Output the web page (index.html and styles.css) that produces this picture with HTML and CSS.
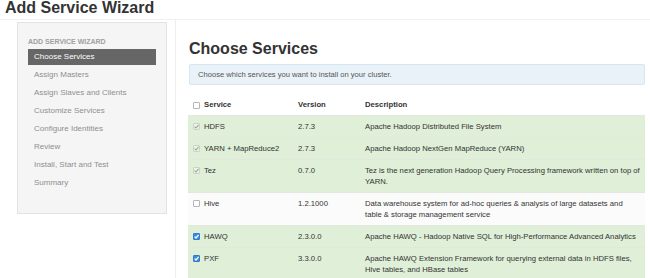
FILE: index.html
```html
<!DOCTYPE html>
<html lang="en">
<head>
    <meta charset="UTF-8">
    <meta name="viewport" content="width=device-width, initial-scale=1.0">
    <title>Add Service Wizard</title>
    <link rel="stylesheet" href="styles.css">
</head>
<body>
    <h1 class="page-title">Add Service Wizard</h1>

    <div class="wizard">
        <div class="wizard-nav">
            <div class="nav-box">
                <div class="nav-header">ADD SERVICE WIZARD</div>
                <div class="nav-item active">Choose Services</div>
                <div class="nav-item">Assign Masters</div>
                <div class="nav-item">Assign Slaves and Clients</div>
                <div class="nav-item">Customize Services</div>
                <div class="nav-item">Configure Identities</div>
                <div class="nav-item">Review</div>
                <div class="nav-item">Install, Start and Test</div>
                <div class="nav-item">Summary</div>
            </div>
        </div>

        <div class="wizard-content">
            <h2>Choose Services</h2>
            <div class="alert">Choose which services you want to install on your cluster.</div>

            <table class="services">
                <thead>
                    <tr>
                        <th class="col-name"><span class="cb"></span>Service</th>
                        <th class="col-version">Version</th>
                        <th>Description</th>
                    </tr>
                </thead>
                <tbody>
                    <tr class="selected">
                        <td><span class="cb cb-locked"><svg viewBox="0 0 7 7"><polyline points="1.6,3.6 3,5 5.6,1.9"/></svg></span>HDFS</td>
                        <td>2.7.3</td>
                        <td>Apache Hadoop Distributed File System</td>
                    </tr>
                    <tr class="selected">
                        <td><span class="cb cb-locked"><svg viewBox="0 0 7 7"><polyline points="1.6,3.6 3,5 5.6,1.9"/></svg></span>YARN + MapReduce2</td>
                        <td>2.7.3</td>
                        <td>Apache Hadoop NextGen MapReduce (YARN)</td>
                    </tr>
                    <tr class="selected">
                        <td><span class="cb cb-locked"><svg viewBox="0 0 7 7"><polyline points="1.6,3.6 3,5 5.6,1.9"/></svg></span>Tez</td>
                        <td>0.7.0</td>
                        <td>Tez is the next generation Hadoop Query Processing framework written on top of YARN.</td>
                    </tr>
                    <tr>
                        <td><span class="cb"></span>Hive</td>
                        <td>1.2.1000</td>
                        <td>Data warehouse system for ad-hoc queries &amp; analysis of large datasets and<br>table &amp; storage management service</td>
                    </tr>
                    <tr class="selected">
                        <td><span class="cb cb-on"><svg viewBox="0 0 7 7"><polyline points="1.6,3.6 3,5 5.6,1.9"/></svg></span>HAWQ</td>
                        <td>2.3.0.0</td>
                        <td>Apache HAWQ - Hadoop Native SQL for High-Performance Advanced Analytics</td>
                    </tr>
                    <tr class="selected">
                        <td><span class="cb cb-on"><svg viewBox="0 0 7 7"><polyline points="1.6,3.6 3,5 5.6,1.9"/></svg></span>PXF</td>
                        <td>3.3.0.0</td>
                        <td>Apache HAWQ Extension Framework for querying external data in HDFS files, Hive tables, and HBase tables</td>
                    </tr>
                </tbody>
            </table>
        </div>
    </div>
</body>
</html>
```

FILE: styles.css
```css
* {
    margin: 0;
    padding: 0;
    box-sizing: border-box;
    font-family: 'Liberation Sans', Arial, sans-serif;
}

body {
    background-color: #fff;
    color: #333;
    overflow: hidden;
}

.page-title {
    font-size: 16px;
    line-height: 16px;
    font-weight: bold;
    color: #333;
    padding-left: 5px;
    height: 20px;
    border-bottom: 1px solid #f0f0f0;
}

.wizard {
    display: flex;
}

.wizard-nav {
    width: 175px;
    padding: 2px 8px 0 17px;
}

.nav-box {
    background: #f5f5f5;
    border: 1px solid #e3e3e3;
    padding: 14px 10px 20px;
}

.nav-header {
    font-size: 7px;
    line-height: 10px;
    font-weight: bold;
    color: #a0a0a0;
    margin-bottom: 2px;
}

.nav-item {
    font-size: 8px;
    line-height: 16px;
    height: 16px;
    padding-left: 6px;
    margin-bottom: 2px;
    color: #8f8f8f;
}

.nav-item.active {
    background-color: #666;
    color: #fff;
}

.wizard-content {
    flex: 1;
    border-left: 1px solid #eee;
    padding: 19px 5px 0 13px;
    min-height: 258px;
}

h2 {
    font-size: 16px;
    line-height: 20px;
    font-weight: bold;
    color: #333;
    margin-bottom: 5px;
}

.alert {
    background-color: #e9f2f8;
    border: 1px solid #d6e6f0;
    border-radius: 2px;
    padding: 4px 8px;
    font-size: 7.6px;
    line-height: 11px;
    color: #555;
    margin-bottom: 9px;
}

.services {
    width: 457px;
    margin-left: -1px;
    border-collapse: collapse;
    font-size: 7.7px;
    line-height: 11px;
    color: #333;
}

.services th,
.services td {
    text-align: left;
    vertical-align: top;
    padding: 5px;
}

.services th {
    font-weight: bold;
}

.services td {
    border-top: 1px solid #e2e8de;
}

.services td:last-child {
    padding-right: 2px;
}

.col-name {
    width: 105px;
}

.col-version {
    width: 67px;
}

.services tbody tr {
    background-color: #fbfbfb;
}

.services tbody tr.selected {
    background-color: #dfefd8;
}

.cb {
    display: inline-block;
    width: 7px;
    height: 7px;
    border: 1px solid #b5b5b5;
    border-radius: 1px;
    background: #fff;
    margin-right: 4px;
    vertical-align: -1px;
    position: relative;
}

th .cb {
    vertical-align: -2px;
}

.cb svg {
    position: absolute;
    left: -1px;
    top: -1px;
    width: 7px;
    height: 7px;
    fill: none;
    stroke-width: 1.1;
}

.cb-locked {
    background: #eef3ea;
    border-color: #c9d4c4;
}

.cb-locked svg {
    stroke: #9aa596;
}

.cb-on {
    background: #3b8ee0;
    border-color: #2e7bcf;
}

.cb-on svg {
    stroke: #fff;
    stroke-width: 1.3;
}
```
